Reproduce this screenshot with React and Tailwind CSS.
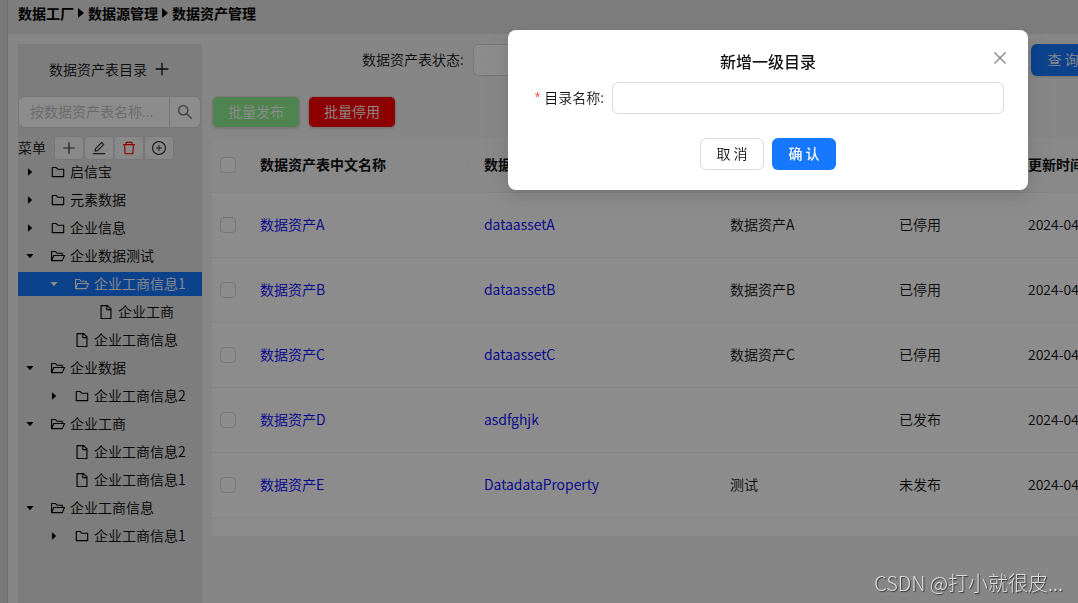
import React, { useState } from "react";
import {
  AiOutlinePlus,
  AiOutlineSearch,
  AiOutlineEdit,
  AiOutlineDelete,
  AiOutlinePlusCircle,
  AiOutlineFolder,
  AiOutlineFolderOpen,
  AiOutlineFile,
  AiOutlineClose,
  AiFillCaretRight,
  AiFillCaretDown,
} from "react-icons/ai";

const crumbs = ["数据工厂", "数据源管理", "数据资产管理"];

const tree = [
  { title: "启信宝", level: 0, type: "closed" },
  { title: "元素数据", level: 0, type: "closed" },
  { title: "企业信息", level: 0, type: "closed" },
  { title: "企业数据测试", level: 0, type: "open" },
  { title: "企业工商信息1", level: 1, type: "open" },
  { title: "企业工商", level: 2, type: "leaf" },
  { title: "企业工商信息", level: 1, type: "leaf" },
  { title: "企业数据", level: 0, type: "open" },
  { title: "企业工商信息2", level: 1, type: "closed" },
  { title: "企业工商", level: 0, type: "open" },
  { title: "企业工商信息2", level: 1, type: "leaf" },
  { title: "企业工商信息1", level: 1, type: "leaf" },
  { title: "企业工商信息", level: 0, type: "open" },
  { title: "企业工商信息1", level: 1, type: "closed" },
];

const rows = [
  { cn: "数据资产A", en: "dataassetA", desc: "数据资产A", status: "已停用", time: "2024-04-" },
  { cn: "数据资产B", en: "dataassetB", desc: "数据资产B", status: "已停用", time: "2024-04-" },
  { cn: "数据资产C", en: "dataassetC", desc: "数据资产C", status: "已停用", time: "2024-04-" },
  { cn: "数据资产D", en: "asdfghjk", desc: "", status: "已发布", time: "2024-04-" },
  { cn: "数据资产E", en: "DatadataProperty", desc: "测试", status: "未发布", time: "2024-04-" },
];

const indents = ["pl-0", "pl-6", "pl-12"];

const tools = [
  { label: "新增", Icon: AiOutlinePlus, color: "text-[#333333]" },
  { label: "编辑", Icon: AiOutlineEdit, color: "text-[#333333]" },
  { label: "删除", Icon: AiOutlineDelete, color: "text-[#ff0000]" },
  { label: "新增下级", Icon: AiOutlinePlusCircle, color: "text-[#333333]" },
];

function TreeNode({ node, selected, onSelect }) {
  const { title, level, type } = node;
  const Caret = type === "open" ? AiFillCaretDown : AiFillCaretRight;
  const Icon = type === "leaf" ? AiOutlineFile : type === "open" ? AiOutlineFolderOpen : AiOutlineFolder;

  return (
    <li className={`mb-1 ${selected ? "bg-[#1677ff] text-white" : "text-black"}`}>
      <button onClick={onSelect} className={`flex h-6 w-full items-center text-left ${indents[level]}`}>
        <span className="flex w-6 shrink-0 justify-center">
          {type !== "leaf" && <Caret className="size-[10px]" />}
        </span>
        <span className="ml-1 flex w-6 shrink-0 justify-center">
          <Icon className="size-4" />
        </span>
        <span className="pb-0.5 whitespace-nowrap">{title}</span>
      </button>
    </li>
  );
}

function Sidebar() {
  const [current, setCurrent] = useState(4);

  return (
    <aside className="w-[184px] shrink-0 bg-[#e4e4e4]">
      <div className="mx-4 flex items-center justify-center gap-1.5 rounded-lg border-b border-[#dedede] pt-[15px] pb-2 leading-5">
        <span>数据资产表目录</span>
        <button aria-label="新增一级目录">
          <AiOutlinePlus className="size-[18px]" />
        </button>
      </div>

      {/* Search */}
      <div className="mt-2 mr-px flex h-8 rounded-md border border-[#d9d9d9] bg-white">
        <input
          aria-label="按数据资产表名称搜索"
          placeholder="按数据资产表名称..."
          className="w-full min-w-0 flex-1 bg-transparent px-[11px] pb-0.5 outline-none placeholder:text-[#bfbfbf]"
        />
        <button aria-label="搜索" className="flex w-[31px] shrink-0 items-center justify-center border-l border-[#d9d9d9]">
          <AiOutlineSearch className="size-[18px] text-[#737373]" />
        </button>
      </div>

      <div className="mt-2 flex h-6 items-center">
        <span className="mr-2 pb-0.5">菜单</span>
        {tools.map(({ label, Icon, color }) => (
          <button
            key={label}
            aria-label={label}
            className={`flex h-6 w-[30px] items-center justify-center rounded border border-[#d9d9d9] bg-[#fafafa] ${color}`}
          >
            <Icon className="size-4" />
          </button>
        ))}
      </div>

      <ul>
        {tree.map((node, i) => (
          <TreeNode key={i} node={node} selected={i === current} onSelect={() => setCurrent(i)} />
        ))}
      </ul>
    </aside>
  );
}

function Checkbox({ label }) {
  return (
    <input
      type="checkbox"
      aria-label={label}
      className="block size-4 appearance-none rounded border border-[#d9d9d9] bg-white checked:bg-[#1677ff]"
    />
  );
}

function AssetTable() {
  return (
    <div className="bg-white pb-[18px]">
      <table className="w-full table-fixed text-left">
        <thead className="bg-[#fafafa]">
          <tr className="h-[54px] border-b border-[#f0f0f0]">
            <th className="w-8 px-2"><Checkbox label="全选" /></th>
            <th className="w-56 px-4 pb-0.5 font-bold">
              <div className="-mr-4 border-r border-[#f0f0f0]">数据资产表中文名称</div>
            </th>
            <th className="w-[246px] px-4 pb-0.5 font-bold">数据资产表英文名称</th>
            <th className="w-[169px] px-4 pb-0.5 font-bold">描述</th>
            <th className="w-[129px] px-4 pb-0.5 font-bold">状态</th>
            <th className="px-4 pb-0.5 font-bold">更新时间</th>
          </tr>
        </thead>
        <tbody>
          {rows.map((r) => (
            <tr key={r.cn} className="h-[65px] border-b border-[#f0f0f0]">
              <td className="px-2"><Checkbox label={r.cn} /></td>
              <td className="px-4 pb-0.5"><a href="#cn" className="text-[#0000ff]">{r.cn}</a></td>
              <td className="px-4 pb-0.5"><a href="#en" className="text-[#0000ff]">{r.en}</a></td>
              <td className="px-4 pb-0.5">{r.desc}</td>
              <td className="px-4 pb-0.5">{r.status}</td>
              <td className="px-4 pb-0.5">{r.time}</td>
            </tr>
          ))}
        </tbody>
      </table>
    </div>
  );
}

function CreateModal({ onClose }) {
  const [name, setName] = useState("");

  return (
    <div className="fixed inset-0 flex items-start justify-end bg-black/45 pt-[30px] pr-[50px]">
      <div
        role="dialog"
        aria-labelledby="modal-title"
        className="relative w-[520px] rounded-lg bg-white px-6 py-5 shadow-[0_6px_16px_0_rgba(0,0,0,0.08),0_3px_6px_-4px_rgba(0,0,0,0.12),0_9px_28px_8px_rgba(0,0,0,0.05)]"
      >
        <button onClick={onClose} aria-label="关闭" className="absolute top-[19px] right-[19px] text-[#8c8c8c]">
          <AiOutlineClose className="size-[18px]" />
        </button>
        <h2 id="modal-title" className="mb-2 pb-0.5 text-center text-base leading-[22px] font-medium">新增一级目录</h2>

        <form onSubmit={(e) => e.preventDefault()}>
          <div className="flex items-center gap-2">
            <label htmlFor="dir-name" className="flex w-[72px] shrink-0 items-center justify-end pb-0.5 whitespace-nowrap">
              <span className="mr-1 font-['Liberation_Sans'] text-[#ff4d4f]">*</span>
              目录名称:
            </label>
            <input
              id="dir-name"
              value={name}
              onChange={(e) => setName(e.target.value)}
              className="h-8 min-w-0 flex-1 rounded-md border border-[#d9d9d9] px-3 outline-none"
            />
          </div>
          <div className="mt-6 flex justify-center gap-2">
            <button type="button" onClick={onClose} className="h-8 w-16 rounded-md border border-[#d9d9d9] pb-0.5">取 消</button>
            <button type="submit" className="h-8 w-16 rounded-md bg-[#1677ff] pb-0.5 font-medium text-white">确 认</button>
          </div>
        </form>
      </div>
    </div>
  );
}

export default function App() {
  const [open, setOpen] = useState(true);

  return (
    <div className="flex h-screen overflow-hidden bg-[#f5f5f5] font-['Noto_Sans_CJK_SC',sans-serif] text-sm font-[350] text-[#111111]">
      <div className="w-2 shrink-0 border-r border-[#c8c8c8] bg-[#dadada]" />

      <div className="flex min-w-0 flex-1 flex-col">
        <nav className="flex items-center gap-1 bg-[#e4e4e4] px-[10px] pt-[3px] pb-[11px] leading-5 font-bold text-black">
          {crumbs.map((c, i) => (
            <React.Fragment key={c}>
              {i > 0 && (
                <svg viewBox="0 0 6 10" className="h-[10px] w-[6px]" fill="currentColor">
                  <path d="M0 0L6 5L0 10Z" />
                </svg>
              )}
              <span>{c}</span>
            </React.Fragment>
          ))}
        </nav>

        <div className="flex min-h-0 flex-1 gap-[10px] overflow-hidden pt-[10px] pl-[10px]">
          <Sidebar />

          <main className="min-w-[980px] flex-1">
            {/* Filters */}
            <div className="flex h-8 items-center pl-[150px]">
              <label htmlFor="status" className="w-[111px] shrink-0 pb-0.5 whitespace-nowrap">数据资产表状态:</label>
              <select id="status" className="h-8 w-[534px] appearance-none rounded-md border border-[#d9d9d9] bg-white px-3" />
              <button className="ml-6 h-8 w-16 shrink-0 rounded-md bg-[#1677ff] pb-0.5 text-white shadow-sm">查 询</button>
            </div>

            <div className="mt-5 mb-[10px] flex gap-2">
              <button className="h-8 rounded-md border border-[#d9d9d9] bg-[#90ee90] px-[15px] pb-0.5 text-white shadow-sm">批量发布</button>
              <button className="h-8 rounded-md border border-[#d9d9d9] bg-[#ff0000] px-[15px] pb-0.5 text-white shadow-sm">批量停用</button>
            </div>

            <AssetTable />
          </main>
        </div>
      </div>

      {open && <CreateModal onClose={() => setOpen(false)} />}

      <div className="pointer-events-none fixed right-[15px] bottom-[6px] text-xl leading-7 font-light text-[#dddddd] [text-shadow:1px_1px_1px_rgba(0,0,0,0.6)]">
        CSDN @打小就很皮...
      </div>
    </div>
  );
}
